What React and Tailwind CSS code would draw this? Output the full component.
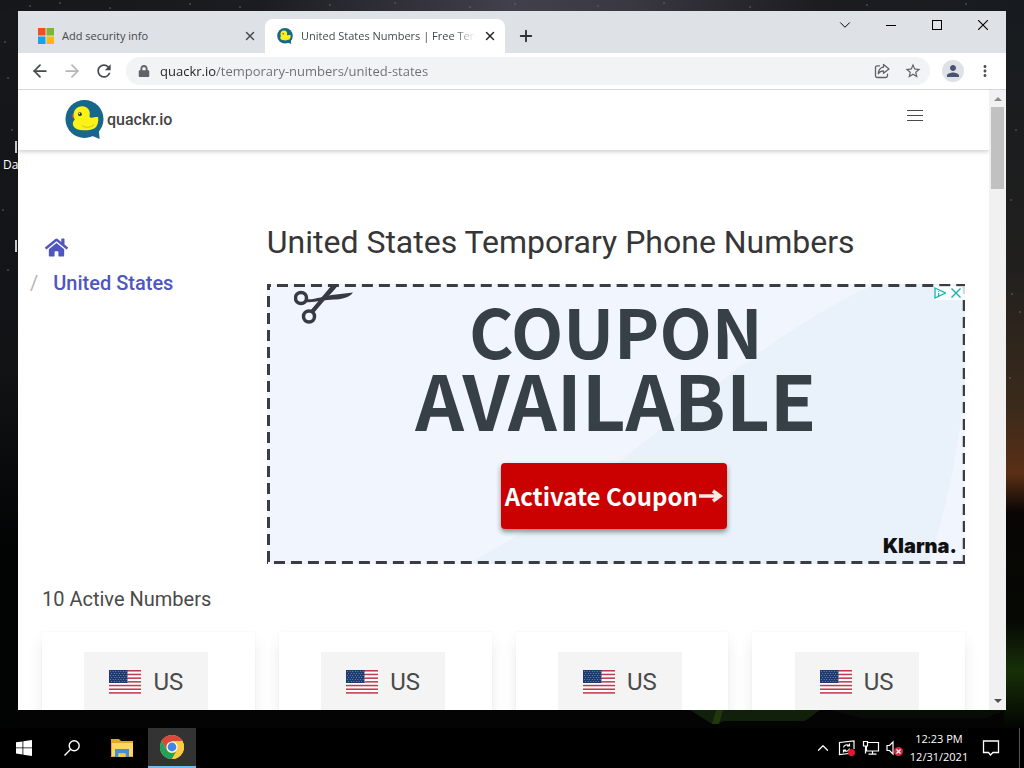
import React from "react";
import { ArrowLeft, ArrowRight, ChevronDown, ChevronUp, X, Plus } from "lucide-react";
import { FaHome, FaLock } from "react-icons/fa";
import { MdPerson, MdRefresh, MdMoreVert, MdStarBorder } from "react-icons/md";

const UI = "font-['Open_Sans','Noto_Sans',sans-serif]";

function DuckLogo({ className }) {
  return (
    <svg viewBox="0 0 40 40" className={className} aria-hidden="true">
      <circle cx="20" cy="19.500" r="19.500" fill="#17678a" />
      <path d="M27 36.500 35.500 40 34.500 29z" fill="#17678a" />
      <path d="M9.500 15.500 6.800 14.600Q6.500 16 7.300 16.400 6.600 17.800 8.200 18.600L10.500 18z" fill="#e0402a" />
      <path d="M17 6.500C23 6.200 26.300 11 25.300 15.500 24.800 17.500 25.500 18.300 27.500 18.100 30 17.500 32 17 34 17.600 34.600 22 33.500 26.500 30.500 29 27 31.500 16 31.800 11.500 29.500 7.500 27.200 7 23 10 20 8.400 17.500 8.300 14.500 9.500 11.500 10.800 8.500 13.500 6.700 17 6.500Z" fill="#fdf11a" />
      <path d="M17.500 26.500C21 29 27 28.500 30 25" fill="none" stroke="#dfd010" strokeWidth="1.200" />
      <circle cx="15.300" cy="14.500" r="1.900" fill="#23324a" />
      <circle cx="14.800" cy="14" r=".7" fill="#fff" />
    </svg>
  );
}

function MicrosoftLogo() {
  return (
    <svg viewBox="0 0 16 16" className="size-4 shrink-0" aria-hidden="true">
      <path d="M0 0h7.500v7.500H0z" fill="#f04e23" />
      <path d="M8.500 0H16v7.500H8.500z" fill="#7cb82f" />
      <path d="M0 8.500h7.500V16H0z" fill="#13a3ef" />
      <path d="M8.500 8.500H16V16H8.500z" fill="#fbb813" />
    </svg>
  );
}

function Flag() {
  const stars = [];
  for (let r = 0; r < 6; r++) {
    for (let c = 0; c < 7; c++) stars.push([1.5 + c * 2.6 + (r % 2) * 1.2, 1.4 + r * 2]);
  }
  return (
    <svg viewBox="0 0 32 24" className="h-6 w-8" aria-hidden="true">
      <rect width="32" height="24" fill="#fff" />
      {[0, 1, 2, 3, 4, 5, 6].map((i) => (
        <rect key={i} y={(i * 24) / 6.5} width="32" height={24 / 13 - 0.3} fill="#bd3d4e" />
      ))}
      <rect width="18.500" height="13" fill="#1e3a70" />
      {stars.map(([x, y], i) => (
        <circle key={i} cx={x} cy={y} r=".45" fill="#d8deea" />
      ))}
    </svg>
  );
}

function Wallpaper() {
  const stars = [[30, 6], [60, 3], [110, 8], [190, 4], [240, 7], [330, 5], [395, 3], [470, 7], [515, 4], [598, 6], [664, 3], [750, 7], [867, 5], [966, 4], [1012, 294], [1010, 378], [1020, 312], [5, 42], [8, 78], [12, 130], [3, 210], [8, 270], [1016, 130], [1011, 200]];
  return (
    <svg className="absolute inset-0 h-full w-full" viewBox="0 0 1024 768" preserveAspectRatio="none" aria-hidden="true">
      <defs>
        <linearGradient id="sky" x1="0" x2="1" y1="0" y2="0">
          <stop offset="0" stopColor="#15171a" />
          <stop offset=".25" stopColor="#1b1c21" />
          <stop offset=".5" stopColor="#42404c" />
          <stop offset=".62" stopColor="#393740" />
          <stop offset=".8" stopColor="#1c1c21" />
          <stop offset="1" stopColor="#171b1f" />
        </linearGradient>
        <linearGradient id="dusk" x1="0" x2="0" y1="0" y2="1">
          <stop offset="0" stopColor="#171b1f" />
          <stop offset=".35" stopColor="#201f1e" />
          <stop offset=".55" stopColor="#3a2a1b" />
          <stop offset=".645" stopColor="#5a2f16" />
          <stop offset=".7" stopColor="#080504" />
          <stop offset=".85" stopColor="#050803" />
          <stop offset=".92" stopColor="#173008" />
          <stop offset="1" stopColor="#020402" />
        </linearGradient>
        <linearGradient id="night" x1="0" x2="0" y1="0" y2="1">
          <stop offset="0" stopColor="#16181b" />
          <stop offset=".5" stopColor="#121315" />
          <stop offset=".75" stopColor="#020303" />
          <stop offset="1" stopColor="#020303" />
        </linearGradient>
      </defs>
      <rect width="1024" height="768" fill="#030403" />
      <rect width="1024" height="20" fill="url(#sky)" />
      <rect y="11" width="20" height="717" fill="url(#night)" />
      <rect x="1004" y="11" width="20" height="717" fill="url(#dusk)" />
      <path d="M690 710h130l-15 11H725l-10 3H712z" fill="#10200a" />
      <path d="M716 710h7l-4 14h-7z" fill="#20380c" />
      <path d="M830 710h176l-20 8H860z" fill="#070c06" />
      {stars.map(([x, y], i) => (
        <circle key={i} cx={x} cy={y} r=".8" fill="#6a6c74" />
      ))}
    </svg>
  );
}

function TabStrip() {
  return (
    <div className={`flex h-[42px] shrink-0 items-end bg-[#dee1e6] text-[12px] text-[#45494d] ${UI}`}>
      <div role="tablist" className="flex items-end">
        <div className="flex h-[34px] w-[247px] items-center pr-2 pl-5">
          <button role="tab" aria-selected="false" className="flex min-w-0 flex-1 items-center gap-2">
            <MicrosoftLogo />
            <span className="truncate text-[11px]">Add security info</span>
          </button>
          <button aria-label="Close Add security info"><X className="size-3.5" strokeWidth={2.4} /></button>
        </div>
        <div className="flex h-[34px] w-[240px] items-center rounded-t-lg bg-white pr-2 pl-3">
          <button role="tab" aria-selected="true" className="flex min-w-0 flex-1 items-center gap-2">
            <DuckLogo className="size-4 shrink-0" />
            <span className="min-w-0 flex-1 overflow-hidden text-left text-[11px] whitespace-nowrap [mask-image:linear-gradient(90deg,#000_88%,transparent)]">
              United States Numbers | Free Temporary
            </span>
          </button>
          <button aria-label="Close United States Numbers" className="ml-2 text-[#222]"><X className="size-3.5" strokeWidth={2.4} /></button>
        </div>
      </div>
      <button aria-label="New tab" className="mb-2 ml-3 text-[#303336]"><Plus className="size-[18px]" strokeWidth={2.5} /></button>
      <div className="ml-auto flex h-[28px] items-center self-start text-black">
        <button aria-label="Search tabs" className="flex w-[46px] justify-center"><ChevronDown className="size-[18px]" strokeWidth={1.3} /></button>
        <button aria-label="Minimize" className="flex w-[46px] justify-center">
          <svg viewBox="0 0 10 10" className="size-[10px]" shapeRendering="crispEdges"><path d="M0 5.500h10" stroke="currentColor" /></svg>
        </button>
        <button aria-label="Maximize" className="flex w-[46px] justify-center">
          <svg viewBox="0 0 10 10" className="size-[10px]" shapeRendering="crispEdges"><path d="M.5.500h9v9h-9z" fill="none" stroke="currentColor" /></svg>
        </button>
        <button aria-label="Close window" className="flex w-[46px] justify-center">
          <svg viewBox="0 0 10 10" className="size-[10px]"><path d="M0 0l10 10M10 0 0 10" stroke="currentColor" strokeWidth="1.100" /></svg>
        </button>
      </div>
    </div>
  );
}

function Toolbar() {
  return (
    <div className="flex h-[37px] shrink-0 items-center border-b border-[#d5d7da] bg-white px-3 text-[#45494d]">
      <button aria-label="Back"><ArrowLeft className="size-5" strokeWidth={2.1} /></button>
      <button aria-label="Forward" className="ml-3 text-[#b4b6b8]"><ArrowRight className="size-5" strokeWidth={2.1} /></button>
      <button aria-label="Reload" className="ml-3"><MdRefresh className="size-5" /></button>
      <div className="ml-3 flex h-7 flex-1 items-center rounded-full bg-[#f1f3f4] pr-2 pl-3">
        <FaLock className="size-3 shrink-0 text-[#5f6368]" />
        <input
          aria-label="Address"
          type="text"
          defaultValue="quackr.io/temporary-numbers/united-states"
          className={`ml-2.5 min-w-0 flex-1 bg-[linear-gradient(90deg,#202124_56px,#6a6e72_56px)] bg-clip-text pt-px text-[13px] text-transparent outline-none ${UI}`}
        />
        <button aria-label="Share this page" className="text-[#5f6368]">
          <svg viewBox="0 0 16 16" className="size-4" fill="none" stroke="currentColor" strokeWidth="1.300" strokeLinejoin="round" strokeLinecap="round">
            <path d="M5.500 2.800H3.200A1.700 1.700 0 0 0 1.500 4.500v8.300a1.700 1.700 0 0 0 1.700 1.700h8.600a1.700 1.700 0 0 0 1.700-1.700v-1.600" />
            <path d="M9.500 1.500 15 6l-5.500 4.300V7.800C7 7.800 5.500 8.700 4.300 10.800 4.500 7 6.300 4.600 9.500 4.200z" />
          </svg>
        </button>
        <button aria-label="Bookmark this tab" className="ml-3.5 text-[#5f6368]"><MdStarBorder className="size-[18px]" /></button>
      </div>
      <button aria-label="Profile" className="ml-3 flex size-[22px] items-center justify-center rounded-full bg-[#dee1e8] text-[#4b5270]">
        <MdPerson className="size-[18px]" />
      </button>
      <button aria-label="Menu" className="ml-3 text-[#505458]"><MdMoreVert className="size-[18px]" /></button>
    </div>
  );
}

function SiteHeader() {
  return (
    <header className="flex h-[60px] items-center justify-between pr-[66px] pl-[47px] shadow-[0_2px_4px_rgba(0,0,0,0.18)]">
      <a href="#home" className="flex items-center gap-[3px] text-[16px] font-medium text-[#454545]">
        <DuckLogo className="mb-0.5 size-[39px]" />
        quackr.io
      </a>
      <button aria-label="Open navigation" className="mb-2.5 flex w-4 flex-col gap-1">
        <span className="h-px bg-[#4a4a4a]" />
        <span className="h-px bg-[#4a4a4a]" />
        <span className="h-px bg-[#4a4a4a]" />
      </button>
    </header>
  );
}

function Scissors() {
  return (
    <svg viewBox="0 0 60 40" className="absolute top-0 left-[27px] h-10 w-[60px]" aria-hidden="true">
      <g fill="none" stroke="#373b41" strokeWidth="3.500">
        <circle cx="7" cy="14" r="5.500" />
        <circle cx="15" cy="32.500" r="5.500" />
      </g>
      <path d="M11 15C20 16.500 28 12 42 10.500L59 8.500C55 14 46 15.500 40 15.500 30 15.500 20 19 11 18z" fill="#373b41" />
      <path d="M16 27 27 14 38 1H44C41 6 34 12.500 30 17L19 30z" fill="#373b41" />
    </svg>
  );
}

function CouponAd() {
  return (
    <section aria-label="Advertisement" className="relative flex h-[280px] flex-col items-center overflow-hidden bg-[#f1f5fe]">
      <svg className="absolute inset-0 h-full w-full" viewBox="0 0 699 280" preserveAspectRatio="none" aria-hidden="true">
        <path d="M200 280C340 210 470 60 610 0H699V100C690 190 672 250 662 280z" fill="#e9f1fb" />
        <g fill="none" stroke="#3b3d42" strokeWidth="3" strokeDasharray="11 6">
          <path d="M-7 1.500H699M-10 278.500H699M1.500-5V280M698-1V280" />
        </g>
      </svg>
      <Scissors />
      <div className="absolute top-0.5 right-0 flex h-3.5 items-center gap-1 bg-white/80 pr-[3px]">
        <button aria-label="Ad choices">
          <svg viewBox="0 0 12 12" className="size-3" fill="none" stroke="#14b3ac" strokeWidth="1.300"><path d="M1 1 11.500 6 1 11zM4.600 4.300v.8M4.600 6v2.800" /></svg>
        </button>
        <button aria-label="Close ad">
          <svg viewBox="0 0 12 12" className="size-3" fill="none" stroke="#14b3ac" strokeWidth="1.400"><path d="M1.500 1.500l9 9M10.500 1.500l-9 9" /></svg>
        </button>
      </div>
      <p className="relative mt-3 flex flex-col items-center font-['Noto_Sans_CJK_SC',sans-serif] leading-[68px] font-bold text-[#373f47]">
        <span className="text-[68px]">COUPON</span>
        <span className="text-[76px]">AVAILABLE</span>
      </p>
      <button className="relative mt-[31px] mr-1 flex h-[66px] w-[226px] items-center justify-center gap-px rounded bg-[#cb0000] font-['Noto_Sans_CJK_SC',sans-serif] text-[24px] font-bold whitespace-nowrap text-white shadow-[0_3px_5px_rgba(60,80,60,0.6)]">
        Activate Coupon
        <svg viewBox="0 0 24 14" className="h-3.5 w-6 shrink-0" fill="none" stroke="#ffe9e4" strokeWidth="3.500"><path d="M0 7h21M14 2l7 5-7 5" /></svg>
      </button>
      <span className="absolute right-2 bottom-[6px] font-['Inter',sans-serif] text-[20px] leading-6 font-black text-[#111]">Klarna.</span>
    </section>
  );
}

function NumberCard() {
  return (
    <a href="#us" className="flex h-[160px] items-start justify-center bg-white pt-5 pr-1 shadow-[0_8px_16px_-2px_rgba(10,10,10,0.1),0_0_0_1px_rgba(10,10,10,0.01)]">
      <span className="flex h-[60px] w-[124px] items-center justify-center gap-3 bg-[#f4f4f4] text-[24px] text-[#4a4a4a]">
        <Flag />
        US
      </span>
    </a>
  );
}

function Site() {
  return (
    <div className="flex min-h-0 flex-1 bg-white font-['Roboto',sans-serif]">
      <div className="min-w-0 flex-1 overflow-hidden">
        <SiteHeader />
        <main className="pt-[74px]">
          <div className="grid grid-cols-4 px-3">
            <nav aria-label="Breadcrumb" className="pt-[5px] text-[20px] font-medium text-[#4f56c0]">
              <a href="#home" aria-label="Home" className="flex h-9 items-center pl-[15px]"><FaHome className="size-[23px]" /></a>
              <div className="flex h-9 items-center gap-[15px]">
                <span className="font-normal text-[#b5b5b5]">/</span>
                <a href="#us">United States</a>
              </div>
            </nav>
            <div className="col-span-3 pr-3">
              <h1 className="mb-6 text-[32px] leading-9 text-[#363636]">United States Temporary Phone Numbers</h1>
              <CouponAd />
            </div>
          </div>
          <div className="px-6">
            <h2 className="mt-5 mb-[18px] text-[20px] leading-[30px] text-[#4a4a4a]">10 Active Numbers</h2>
            <div className="grid grid-cols-4 gap-6">
              <NumberCard />
              <NumberCard />
              <NumberCard />
              <NumberCard />
            </div>
          </div>
        </main>
      </div>
      <div className="flex w-[17px] shrink-0 flex-col items-center bg-[#f1f1f1]" aria-hidden="true">
        <svg viewBox="0 0 16 17" className="h-[17px] w-4"><path d="M4 11h8L8 7z" fill="#8a8a8a" /></svg>
        <div className="h-[82px] w-[13px] bg-[#c1c1c1]" />
        <svg viewBox="0 0 16 17" className="mt-auto h-[17px] w-4"><path d="M4 6h8L8 10z" fill="#505050" /></svg>
      </div>
    </div>
  );
}

function ChromeLogo() {
  return (
    <svg viewBox="0 0 24 24" className="size-6" aria-hidden="true">
      <circle cx="12" cy="12" r="12" fill="#fccb3f" />
      <path d="M1.600 6A12 12 0 0 1 22.400 6H12L6.800 15z" fill="#d9483b" />
      <path d="M1.600 6A12 12 0 0 0 12 24L17.200 15A6 6 0 0 1 6.800 15z" fill="#1fa25a" />
      <path d="M12 6h10.400A12 12 0 0 1 12 24l5.200-9A6 6 0 0 0 12 6z" fill="#fccb3f" />
      <circle cx="12" cy="12" r="5.600" fill="#fff" />
      <circle cx="12" cy="12" r="4.400" fill="#4285e8" />
    </svg>
  );
}

function Taskbar() {
  return (
    <footer className={`relative flex h-10 shrink-0 items-stretch bg-black text-white ${UI}`}>
      <button aria-label="Start" className="flex w-12 items-center justify-center">
        <svg viewBox="0 0 16 16" className="size-4" fill="#fff"><path d="M0 2.300 6.500 1.400v6.100H0zM7.300 1.300 16 0v7.500H7.300zM0 8.300h6.500v6.200L0 13.600zM7.300 8.300H16V16l-8.700-1.300z" /></svg>
      </button>
      <button aria-label="Search" className="flex w-12 items-center justify-center">
        <svg viewBox="0 0 16 16" className="size-4" fill="none" stroke="#fff" strokeWidth="1.400"><circle cx="10.200" cy="5.800" r="5" /><path d="M6.700 9.300.5 15.500" /></svg>
      </button>
      <button aria-label="File Explorer" className="flex w-[52px] items-center justify-center">
        <svg viewBox="0 0 22 18" className="h-[18px] w-[22px]">
          <path d="M0 0h8l2 2h12v16H0z" fill="#e8a827" />
          <path d="M1 4h21v13H1z" fill="#fbd768" />
          <path d="M4 10h14v8h-3.500v-3.500h-7V18H4z" fill="#4391cf" />
          <path d="M7.500 14.500h7V18h-7z" fill="#f4c95a" />
        </svg>
      </button>
      <button aria-label="Google Chrome" className="flex w-12 items-center justify-center border-b-2 border-[#76b9ed] bg-[#333]"><ChromeLogo /></button>
      <div className="ml-auto flex items-center">
        <button aria-label="Show hidden icons"><ChevronUp className="size-[18px]" strokeWidth={1.6} /></button>
        <svg viewBox="0 0 18 16" className="ml-1.5 h-4 w-[18px]" fill="none" stroke="#fff" strokeWidth="1.200" aria-hidden="true">
          <path d="M11 13.500 1.500 14.500V2.500L16 1v8M5.500 7.500C6 5 9 4 11 5.500M11.500 3.500V6H9M11.500 8.500C11 11 8 12 6 10.500M5.500 12.500V10H8" />
          <circle cx="13.500" cy="12.500" r="3.500" fill="#e3182c" stroke="none" />
        </svg>
        <svg viewBox="0 0 18 16" className="ml-1.5 h-4 w-[18px]" fill="none" stroke="#fff" strokeWidth="1.200" aria-hidden="true">
          <path d="M6 2.500h10.500v8.500H4.500V6M10.500 11v3M6.500 14.200h8M1.500 1.500h4V6h-4zM3.500 6v7.500" />
        </svg>
        <svg viewBox="0 0 18 16" className="ml-1.5 h-4 w-[18px]" aria-hidden="true">
          <path d="M1 5.500h2.500L7 2v12L3.500 10.500H1z" fill="none" stroke="#fff" strokeWidth="1.200" />
          <circle cx="12.500" cy="11.500" r="4.500" fill="#d8283e" />
          <path d="M10.500 9.500l4 4M14.500 9.500l-4 4" stroke="#fff" strokeWidth="1.200" />
        </svg>
        <div className="ml-1 flex w-[62px] flex-col items-center text-[11px] leading-[18px] whitespace-nowrap">
          <time>12:23 PM</time>
          <time>12/31/2021</time>
        </div>
        <button aria-label="Notifications" className="mr-[15px] ml-3">
          <svg viewBox="0 0 18 18" className="size-[18px]" fill="none" stroke="#fff" strokeWidth="1.300"><path d="M1.500 2h15v11.500H11L8.500 16 6.500 13.500h-5z" /></svg>
        </button>
        <div className="mx-1 h-full w-px bg-[#555]" />
      </div>
    </footer>
  );
}

export default function App() {
  return (
    <div className="relative flex h-screen flex-col overflow-hidden bg-black">
      <Wallpaper />
      <div className={`absolute top-[141px] left-[3px] text-[12px] text-white ${UI}`}>
        <span className="ml-3 block h-3 w-0.5 bg-[#c8c8c8]" />
        <span className="block leading-6">Data</span>
        <span className="mt-[63px] ml-3 block h-3 w-0.5 bg-[#c8c8c8]" />
      </div>
      <div className="relative flex min-h-0 flex-1 px-[18px] pt-[11px] pb-[18px]">
        <div className="flex min-w-0 flex-1 flex-col overflow-hidden bg-white">
          <TabStrip />
          <Toolbar />
          <Site />
        </div>
      </div>
      <Taskbar />
    </div>
  );
}
